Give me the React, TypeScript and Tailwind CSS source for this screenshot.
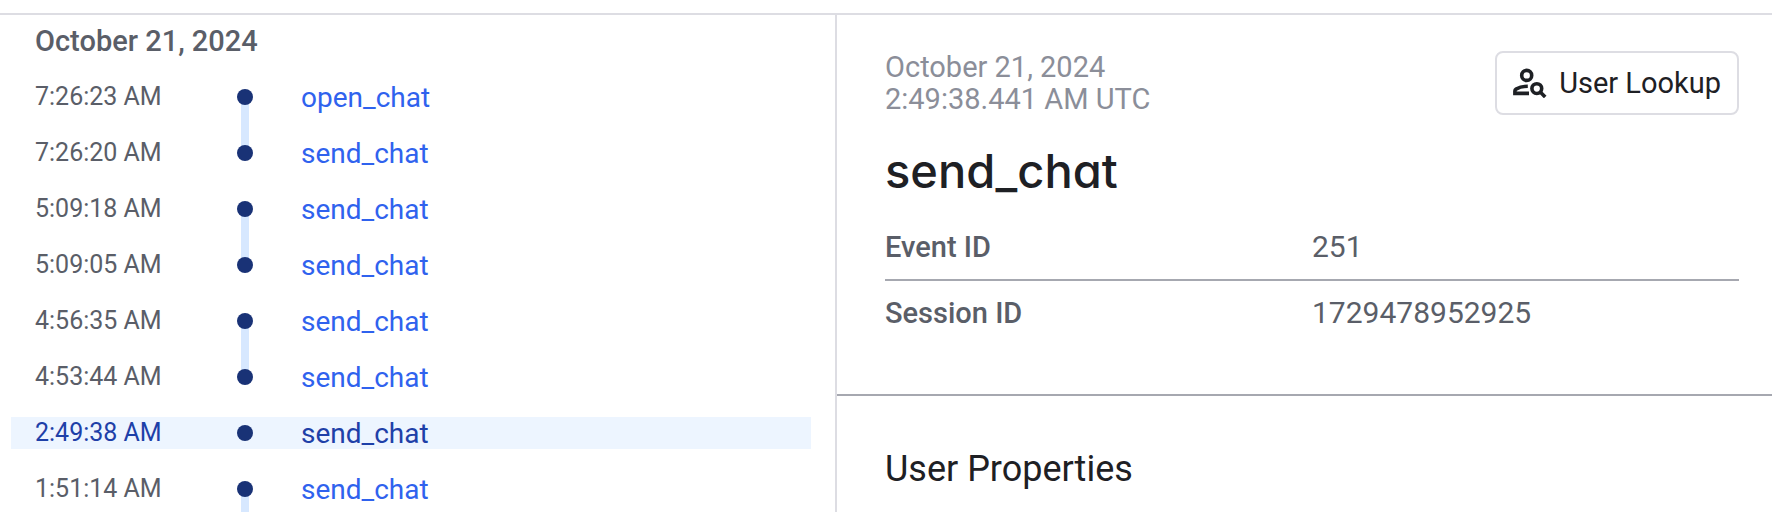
import React from "react";

interface ActivityEvent {
   time: string;
   name: string;
   connected?: boolean;
   selected?: boolean;
}

const events: ActivityEvent[] = [
   { time: "7:26:23 AM", name: "open_chat", connected: true },
   { time: "7:26:20 AM", name: "send_chat" },
   { time: "5:09:18 AM", name: "send_chat", connected: true },
   { time: "5:09:05 AM", name: "send_chat" },
   { time: "4:56:35 AM", name: "send_chat", connected: true },
   { time: "4:53:44 AM", name: "send_chat" },
   { time: "2:49:38 AM", name: "send_chat", selected: true },
   { time: "1:51:14 AM", name: "send_chat", connected: true },
];

const details = [
   { label: "Event ID", value: "251" },
   { label: "Session ID", value: "1729478952925" },
];

function PersonSearchIcon() {
   return (
      <svg
         viewBox="0 0 34 30"
         className="h-[30px] w-[34px]"
         fill="none"
         stroke="currentColor"
         strokeWidth="3.6"
         aria-hidden="true"
      >
         <circle cx="13.7" cy="7.4" r="5" />
         <path d="M14.8 18.2C8.8 18.3 5 19.9 3 21.1C2.2 21.6 1.9 22.2 1.9 23V25.4H16" />
         <circle cx="23.8" cy="20.6" r="4.9" />
         <path d="M27.2 24L32.2 29" />
      </svg>
   );
}

function TimelineRow({ time, name, connected, selected }: ActivityEvent) {
   return (
      <li
         className={`flex h-8 items-center pl-6 ${
            selected ? "bg-[#edf5ff] text-[#1e40a8]" : "text-[#5a5e68]"
         }`}
      >
         <time className="w-[202px] shrink-0 text-[25px] leading-8">{time}</time>
         <span className="relative size-4 shrink-0">
            {/* Line to the next event of the same session */}
            {connected && (
               <span className="absolute left-1 top-2 h-14 w-2 bg-[#d7e8ff]" />
            )}
            <span className="absolute inset-0 z-10 rounded-full bg-[#193276]" />
         </span>
         <a
            href="#"
            className={`ml-12 pt-[2px] text-[28px] leading-8 ${
               selected ? "text-[#1e40a8]" : "text-[#2f62ee]"
            }`}
         >
            {name}
         </a>
      </li>
   );
}

function Timeline() {
   return (
      <section className="border-r-2 border-[#dddde3] pl-[11px] pr-6 pt-[10px]">
         <h2 className="pl-6 text-[29px] font-medium leading-8 text-[#5a5e68]">
            October 21, 2024
         </h2>
         <ol className="mt-6 flex flex-col gap-6">
            {events.map((event) => (
               <TimelineRow key={event.time} {...event} />
            ))}
         </ol>
      </section>
   );
}

function EventDetails() {
   return (
      <section className="text-[29px] leading-8">
         <div className="border-b-2 border-[#a6a8b0] pb-[49px] pl-12 pr-[33px] pt-9">
            <header className="flex items-start justify-between">
               <p className="text-[#8b8e99]">
                  October 21, 2024
                  <br />
                  2:49:38.441 AM UTC
               </p>
               <button
                  type="button"
                  className="flex h-16 items-center gap-3 rounded-lg border-2 border-[#dddde3] px-4 text-[#1e2024]"
               >
                  <PersonSearchIcon />
                  User Lookup
               </button>
            </header>
            <h1 className="pb-5 pt-8 font-[Inter] text-[47px] font-medium leading-12 text-[#1e2024] [font-feature-settings:'cv11']">
               send_chat
            </h1>
            <table className="w-full table-fixed text-left text-[#5a5e68]">
               <tbody>
                  {details.map(({ label, value }) => (
                     <tr
                        key={label}
                        className="border-b-2 border-[#a6a8b0] last:border-b-0"
                     >
                        <th scope="row" className="py-4 font-medium">
                           {label}
                        </th>
                        <td className="py-4 text-[30px] leading-8">{value}</td>
                     </tr>
                  ))}
               </tbody>
            </table>
         </div>
         <h2 className="pl-12 pt-[53px] text-[36px] leading-10 text-[#1e2024]">
            User Properties
         </h2>
      </section>
   );
}

export default function App() {
   return (
      <div className="h-screen overflow-hidden bg-white pt-[13px] font-[Roboto,sans-serif]">
         <main className="grid h-full grid-cols-[837fr_935fr] border-t-2 border-[#dddde3]">
            <Timeline />
            <EventDetails />
         </main>
      </div>
   );
}
